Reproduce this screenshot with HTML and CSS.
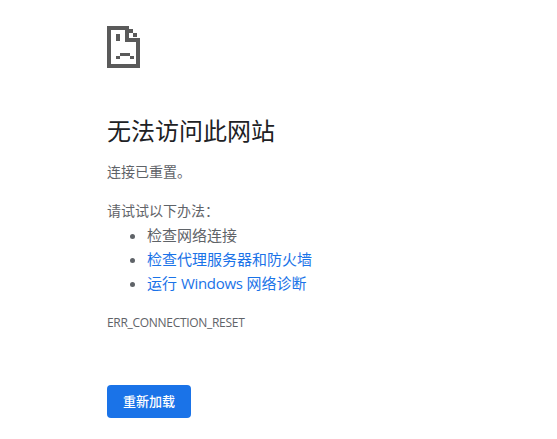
FILE: index.html
```html
<!DOCTYPE html>
<html lang="zh-CN">
<head>
    <meta charset="UTF-8">
    <title>无法访问此网站</title>
    <link rel="stylesheet" href="styles.css">
</head>
<body>
    <div class="wrapper">
        <svg class="icon" width="34" height="42" viewBox="0 0 34 42" shape-rendering="crispEdges" fill="#5a5a5a">
            <rect x="0" y="0" width="20" height="4"/>
            <rect x="0" y="0" width="4" height="42"/>
            <rect x="0" y="38" width="33" height="4"/>
            <rect x="29" y="12" width="4" height="30"/>
            <rect x="18" y="0" width="4" height="16"/>
            <rect x="18" y="12" width="15" height="4"/>
            <rect x="22" y="3" width="4" height="4"/>
            <rect x="26" y="7" width="4" height="4"/>
            <rect x="9" y="8" width="4" height="7"/>
            <rect x="13" y="27" width="10" height="3"/>
            <rect x="9" y="30" width="4" height="3"/>
            <rect x="23" y="30" width="4" height="3"/>
        </svg>
        <h1 class="title">无法访问此网站</h1>
        <p class="summary">连接已重置。</p>
        <div class="tips">请试试以下办法：</div>
        <ul class="tip-list">
            <li>检查网络连接</li>
            <li><a href="#">检查代理服务器和防火墙</a></li>
            <li><a href="#">运行 <span class="latin">Windows</span> 网络诊断</a></li>
        </ul>
        <div class="error-code">ERR_CONNECTION_RESET</div>
        <button class="reload">重新加载</button>
    </div>
</body>
</html>
```

FILE: styles.css
```css
body {
    margin: 0;
    background: #fff;
    color: #5f6368;
    font-family: "Open Sans", "Noto Sans CJK SC", sans-serif;
    font-size: 14px;
}

.wrapper {
    padding: 26px 0 0 107px;
}

.icon {
    display: block;
}

.title {
    margin: 45px 0 0;
    color: #202124;
    font-size: 24px;
    font-weight: 400;
    line-height: 36px;
}

.summary {
    margin: 13px 0 0;
    line-height: 20px;
}

.tips {
    margin-top: 19px;
    line-height: 20px;
}

.tip-list {
    margin: 2px 0 0;
    padding-left: 40px;
    font-size: 15px;
}

.tip-list li {
    line-height: 24px;
}

.tip-list a {
    color: #1a73e8;
    text-decoration: none;
}

.latin {
    letter-spacing: -0.3px;
}

.error-code {
    margin-top: 20px;
    font-size: 12px;
    line-height: 16px;
    letter-spacing: -0.3px;
}

.reload {
    display: block;
    margin-top: 54px;
    width: 84px;
    height: 33px;
    padding: 0 0 3px;
    border: 0;
    border-radius: 4px;
    background: #1a73e8;
    color: #fff;
    font-family: inherit;
    font-size: 13px;
    font-weight: 500;
}
```
